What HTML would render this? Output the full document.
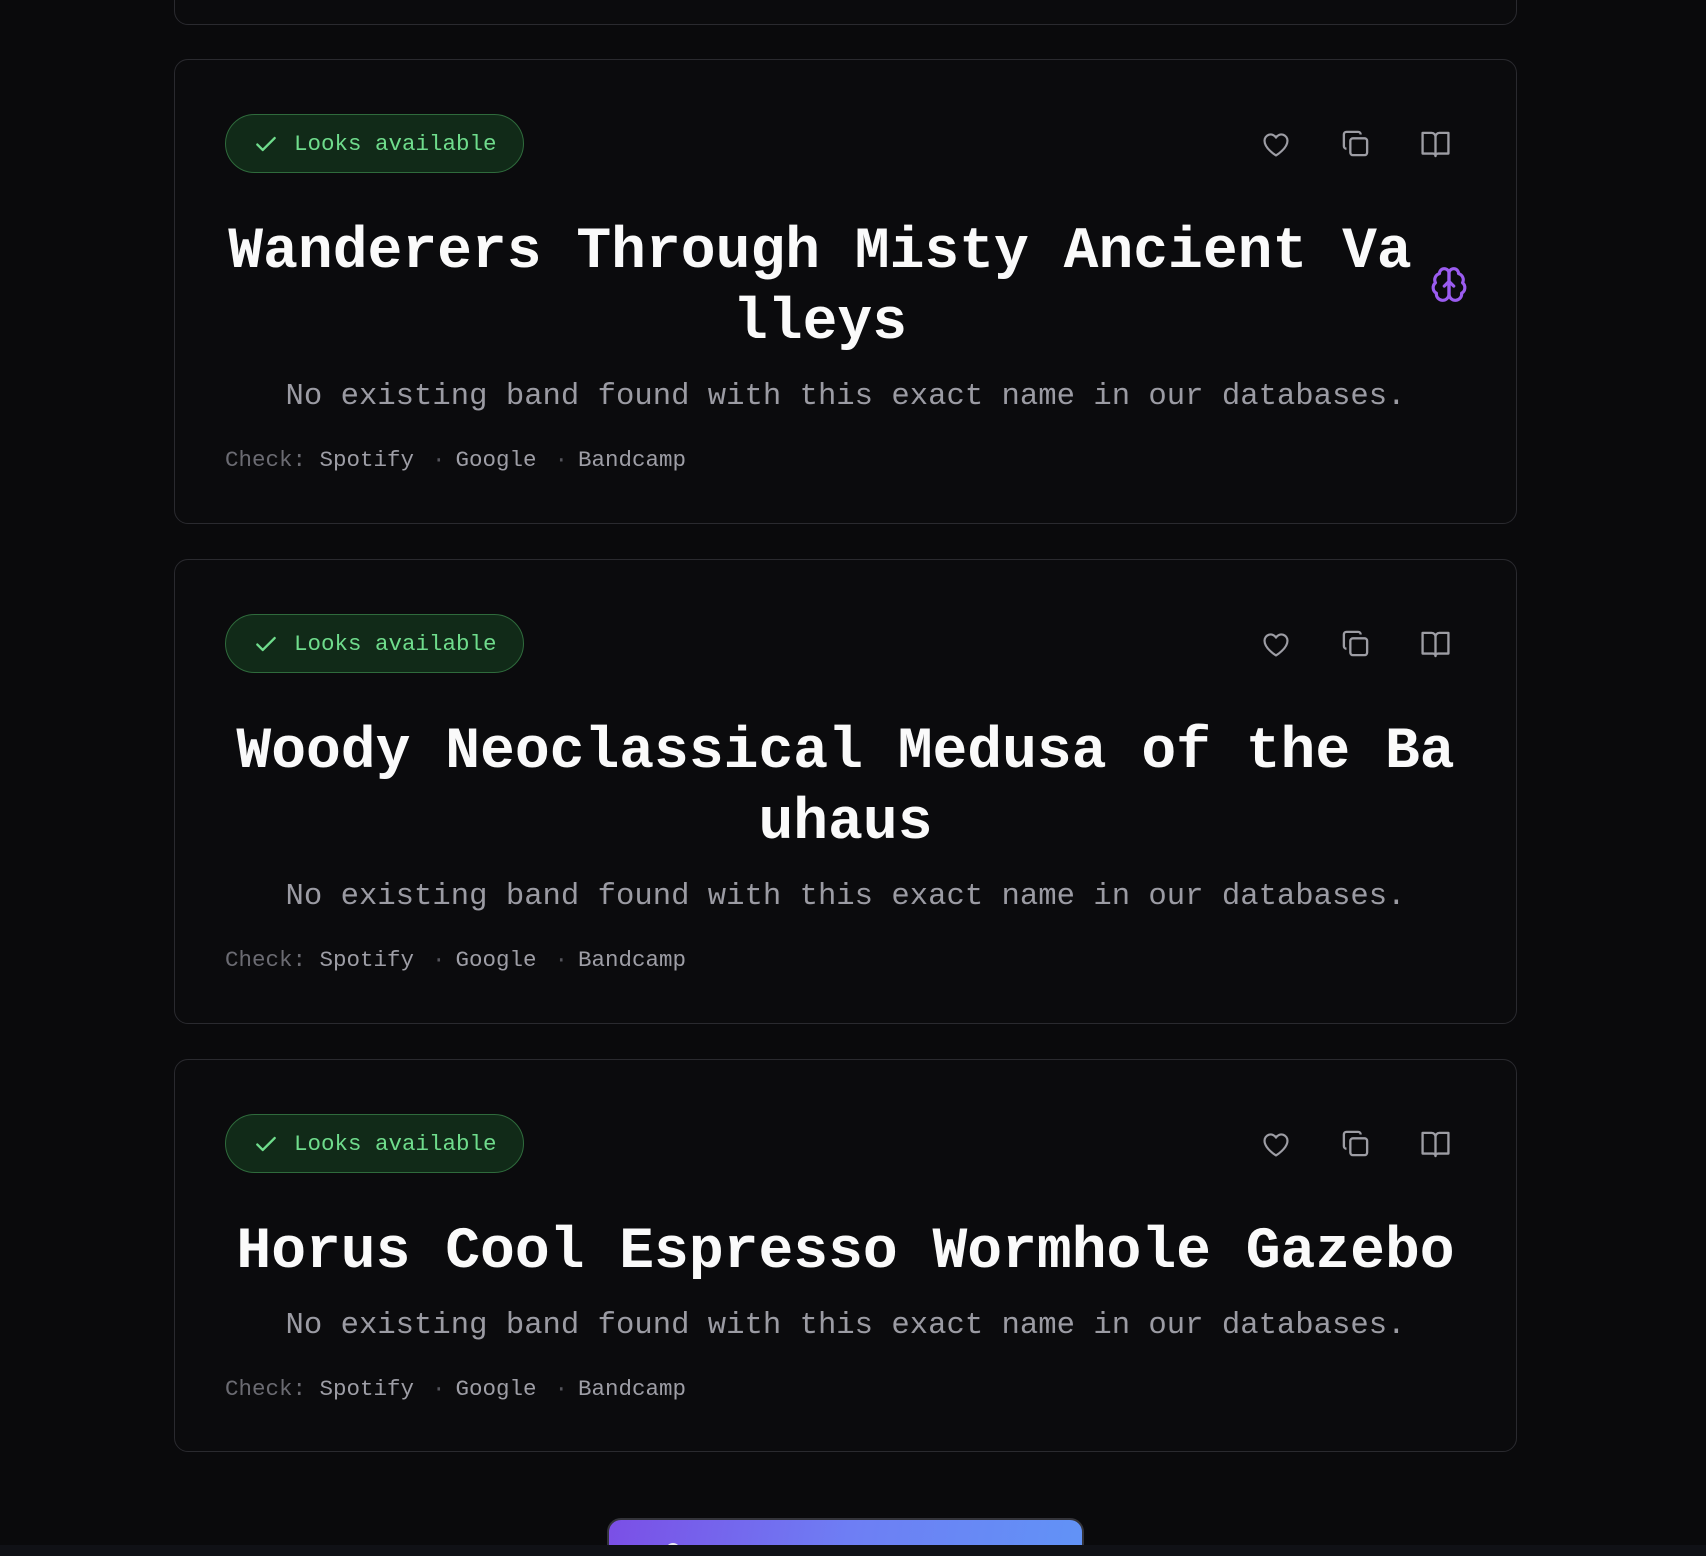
<!DOCTYPE html>
<html><head><meta charset="utf-8"><style>
html,body{margin:0;padding:0;background:#0a0a0c;width:1706px;height:1556px;overflow:hidden;font-family:"Liberation Mono",monospace;position:relative;}
.card{position:absolute;left:174px;width:1343px;box-sizing:border-box;border:1.5px solid #2a2a2f;border-radius:14px;background:#0b0b0d;padding:54px 50px 0 50px;}
.badge{display:inline-flex;align-items:center;box-sizing:border-box;height:59px;width:299px;border:1.5px solid #2f6b3c;border-radius:30px;background:#112a18;color:#6fdc8c;font-size:22.5px;padding-left:27px;}
.badge svg{margin-right:15px}
.title{margin-top:44px;color:#fafafa;font-size:58px;line-height:71px;font-weight:bold;text-align:center;word-break:break-all;}
.desc{margin-top:18px;color:#9b9ba3;font-size:30.6px;line-height:40px;text-align:center;}
.check{margin-top:28px;color:#9e9ea6;font-size:22.5px;line-height:30px;}
.check .l{color:#6b6b72}
.sep{display:inline-block;width:13.5px;text-align:center;margin:0 10px 0 18px;color:#55555c}
.icons{position:absolute;top:67px;left:1085px;}
.icons svg{position:absolute;}
.brain{position:absolute;}
</style></head><body>
<div style="position:absolute;left:174px;top:-40px;width:1343px;height:65px;box-sizing:border-box;border:1.5px solid #2a2a2f;border-radius:14px;background:#0b0b0d"></div>

<div class="card" style="top:59px;height:465px">
  <div class="badge"><svg width="26" height="26" viewBox="0 0 24 24" fill="none" stroke="#6fdc8c" stroke-width="2.2" stroke-linecap="round" stroke-linejoin="round"><path d="M4 12.5l5 5L20 6.5"/></svg>Looks available</div>
  <div class="icons">
    <svg style="left:0;top:3px" width="32" height="28" viewBox="0 0 24 22" fill="none" stroke="#9d9da4" stroke-width="1.7" stroke-linejoin="round"><path d="M12 20s-9-5.5-9-11.5A4.8 4.8 0 0 1 12 6a4.8 4.8 0 0 1 9 2.5C21 14.5 12 20 12 20z"/></svg>
    <svg style="left:80px;top:1px" width="31" height="31" viewBox="0 0 24 24" fill="none" stroke="#9d9da4" stroke-width="1.8" stroke-linejoin="round"><rect x="8" y="8" width="13" height="13" rx="2"/><path d="M5 16c-1.1 0-2-.9-2-2V5c0-1.1.9-2 2-2h9c1.1 0 2 .9 2 2"/></svg>
    <svg style="left:160px;top:3px" width="31" height="29" viewBox="0 0 24 22" fill="none" stroke="#9d9da4" stroke-width="1.8" stroke-linejoin="round"><path d="M2 2h7a3 3 0 0 1 3 3v15a2 2 0 0 0-2-2H2zM22 2h-7a3 3 0 0 0-3 3v15a2 2 0 0 1 2-2h8z"/></svg>
  </div>
  <div class="title" style="width:1190px">Wanderers Through Misty Ancient Valleys</div>
  <svg class="brain" style="left:1255px;top:205px" width="38" height="39" viewBox="0 0 24 24" fill="none" stroke="#9b5cf0" stroke-width="2" stroke-linecap="round" stroke-linejoin="round"><path d="M12 5a3 3 0 1 0-5.997.125 4 4 0 0 0-2.526 5.77 4 4 0 0 0 .556 6.588A4 4 0 1 0 12 18Z"/><path d="M12 5a3 3 0 1 1 5.997.125 4 4 0 0 1 2.526 5.77 4 4 0 0 1-.556 6.588A4 4 0 1 1 12 18Z"/><path d="M12 5v13M9 13l3-3 3 3"/></svg>
  <div class="desc">No existing band found with this exact name in our databases.</div>
  <div class="check"><span class="l">Check: </span>Spotify<span class="sep">·</span>Google<span class="sep">·</span>Bandcamp</div>
</div>

<div class="card" style="top:559px;height:465px">
  <div class="badge"><svg width="26" height="26" viewBox="0 0 24 24" fill="none" stroke="#6fdc8c" stroke-width="2.2" stroke-linecap="round" stroke-linejoin="round"><path d="M4 12.5l5 5L20 6.5"/></svg>Looks available</div>
  <div class="icons">
    <svg style="left:0;top:3px" width="32" height="28" viewBox="0 0 24 22" fill="none" stroke="#9d9da4" stroke-width="1.7" stroke-linejoin="round"><path d="M12 20s-9-5.5-9-11.5A4.8 4.8 0 0 1 12 6a4.8 4.8 0 0 1 9 2.5C21 14.5 12 20 12 20z"/></svg>
    <svg style="left:80px;top:1px" width="31" height="31" viewBox="0 0 24 24" fill="none" stroke="#9d9da4" stroke-width="1.8" stroke-linejoin="round"><rect x="8" y="8" width="13" height="13" rx="2"/><path d="M5 16c-1.1 0-2-.9-2-2V5c0-1.1.9-2 2-2h9c1.1 0 2 .9 2 2"/></svg>
    <svg style="left:160px;top:3px" width="31" height="29" viewBox="0 0 24 22" fill="none" stroke="#9d9da4" stroke-width="1.8" stroke-linejoin="round"><path d="M2 2h7a3 3 0 0 1 3 3v15a2 2 0 0 0-2-2H2zM22 2h-7a3 3 0 0 0-3 3v15a2 2 0 0 1 2-2h8z"/></svg>
  </div>
  <div class="title">Woody Neoclassical Medusa of the Bauhaus</div>
  <div class="desc">No existing band found with this exact name in our databases.</div>
  <div class="check"><span class="l">Check: </span>Spotify<span class="sep">·</span>Google<span class="sep">·</span>Bandcamp</div>
</div>

<div class="card" style="top:1059px;height:393px">
  <div class="badge"><svg width="26" height="26" viewBox="0 0 24 24" fill="none" stroke="#6fdc8c" stroke-width="2.2" stroke-linecap="round" stroke-linejoin="round"><path d="M4 12.5l5 5L20 6.5"/></svg>Looks available</div>
  <div class="icons">
    <svg style="left:0;top:3px" width="32" height="28" viewBox="0 0 24 22" fill="none" stroke="#9d9da4" stroke-width="1.7" stroke-linejoin="round"><path d="M12 20s-9-5.5-9-11.5A4.8 4.8 0 0 1 12 6a4.8 4.8 0 0 1 9 2.5C21 14.5 12 20 12 20z"/></svg>
    <svg style="left:80px;top:1px" width="31" height="31" viewBox="0 0 24 24" fill="none" stroke="#9d9da4" stroke-width="1.8" stroke-linejoin="round"><rect x="8" y="8" width="13" height="13" rx="2"/><path d="M5 16c-1.1 0-2-.9-2-2V5c0-1.1.9-2 2-2h9c1.1 0 2 .9 2 2"/></svg>
    <svg style="left:160px;top:3px" width="31" height="29" viewBox="0 0 24 22" fill="none" stroke="#9d9da4" stroke-width="1.8" stroke-linejoin="round"><path d="M2 2h7a3 3 0 0 1 3 3v15a2 2 0 0 0-2-2H2zM22 2h-7a3 3 0 0 0-3 3v15a2 2 0 0 1 2-2h8z"/></svg>
  </div>
  <div class="title">Horus Cool Espresso Wormhole Gazebo</div>
  <div class="desc">No existing band found with this exact name in our databases.</div>
  <div class="check"><span class="l">Check: </span>Spotify<span class="sep">·</span>Google<span class="sep">·</span>Bandcamp</div>
</div>

<div style="position:absolute;left:607px;top:1518px;width:477px;height:38px;overflow:hidden;">
  <div style="width:477px;height:60px;box-sizing:border-box;border:2px solid #34343a;border-radius:14px;background:linear-gradient(100deg,#7b4fe6,#6e7ef4 50%,#6193f6)"></div>
  <div style="position:absolute;left:59px;top:25px;width:14px;height:14px;border-radius:50%;background:#e8e8f0"></div>
</div>
<div style="position:absolute;left:0;top:1545px;width:1706px;height:11px;background:#101116;z-index:5"></div>
</body></html>
